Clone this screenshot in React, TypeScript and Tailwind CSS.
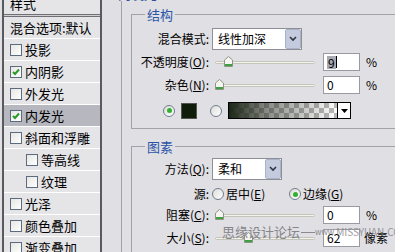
import React from "react";

const F = "font-['Noto_Sans_CJK_SC','Noto_Sans',sans-serif]";

function Check({ on }: { on?: boolean }) {
  return (
    <span className="w-[12px] h-[12px] border border-[#5d6b80] bg-gradient-to-br from-[#e6e6e2] to-white flex items-center justify-center shrink-0">
      {on && (
        <svg width="8" height="8" viewBox="0 0 8 8">
          <path d="M1 4 L3 6 L7 1.5" stroke="#2a9a2a" strokeWidth="2" fill="none" />
        </svg>
      )}
    </span>
  );
}

function Radio({ on }: { on?: boolean }) {
  return (
    <span className="w-[12px] h-[12px] rounded-full border border-[#6f7d90] bg-gradient-to-br from-[#dcdcd6] to-white flex items-center justify-center shrink-0">
      {on && <span className="w-[5px] h-[5px] rounded-full bg-[#30b030]" />}
    </span>
  );
}

function Thumb() {
  return (
    <svg width="9" height="11" viewBox="0 0 9 11">
      <path d="M0.5 4 L4.5 0.5 L8.5 4 L8.5 10.5 L0.5 10.5 Z" fill="#f4f4f0" stroke="#8e9488" />
      <rect x="1" y="8" width="7" height="2" fill="#3fa03f" />
    </svg>
  );
}

function Slider({ pos }: { pos: string }) {
  return (
    <div className="relative w-[100px] h-[18px] ml-[6px]">
      <div className="absolute left-0 right-0 top-[8px] h-[3px] rounded-full border border-[#c4c4ba] bg-[#f3f3ee]" />
      <div className={`absolute top-[3px] ${pos}`}>
        <Thumb />
      </div>
    </div>
  );
}

function Chevron() {
  return (
    <span className="w-[16px] h-[20px] bg-[#c5cbde] border border-[#aab2c8] rounded-[2px] flex items-center justify-center">
      <svg width="8" height="6" viewBox="0 0 8 6">
        <path d="M1 1 L4 4 L7 1" stroke="#30343e" strokeWidth="1.6" fill="none" />
      </svg>
    </span>
  );
}

function Label({ children }: { children: React.ReactNode }) {
  return <span className="w-[77px] text-right shrink-0 whitespace-nowrap">{children}</span>;
}

function Input({ children }: { children: React.ReactNode }) {
  return (
    <span className="ml-[8px] w-[37px] h-[18px] border border-[#9a9aa2] bg-white flex items-center pl-[3px] shrink-0">
      {children}
    </span>
  );
}

function Row({ label, sub, on, sel }: { label: string; sub?: boolean; on?: boolean; sel?: boolean }) {
  return (
    <div
      className={`h-[22px] border-b border-white flex items-center ${sub ? "pl-[22px]" : "pl-[6px]"} ${
        sel ? "bg-[#b7b7c0]" : "bg-[#e5e5e8]"
      }`}
    >
      <Check on={on} />
      <span className="ml-[3px] whitespace-nowrap">{label}</span>
    </div>
  );
}

export default function App() {
  return (
    <div className={`${F} w-[395px] h-[252px] overflow-hidden bg-[#e0dfe3] flex text-[12px] leading-[14px] text-black`}>
      <div className="ml-[2px] w-[100px] h-[260px] border-x-2 border-[#5a5a5e] bg-[#e5e5e8] flex flex-col shrink-0 text-[13px]">
        <div className="h-[14px] overflow-hidden pl-[6px]">
          <div className="-mt-[4px] leading-[16px]">样式</div>
        </div>
        <div className="h-[3px] border-y border-[#707074] bg-[#d0d0d4]" />
        <div className="h-[22px] border-b border-white flex items-center pl-[6px] whitespace-nowrap">混合选项:默认</div>
        <Row label="投影" />
        <Row label="内阴影" on />
        <Row label="外发光" />
        <Row label="内发光" on sel />
        <Row label="斜面和浮雕" />
        <Row label="等高线" sub />
        <Row label="纹理" sub />
        <Row label="光泽" />
        <Row label="颜色叠加" />
        <Row label="渐变叠加" />
      </div>

      <div className="relative ml-[19px] flex-1 border-l border-[#a2a2a8] pl-[9px] flex flex-col">
        <div className="absolute left-[-6px] top-[-13px] text-[#2a4f9c] text-[13px] leading-[14px] bg-[#e0dfe3] px-[2px]">内发光</div>

        {/* 结构 */}
        <div className="relative mt-[14px] h-[115px] border-y border-l border-[#a2a2a8] flex flex-col shrink-0">
          <span className="absolute left-[13px] top-[-7px] px-[2px] bg-[#e0dfe3] text-[#2a55a8] text-[13px] leading-[14px]">结构</span>
          <div className="mt-[13px] h-[22px] flex items-center">
            <Label>混合模式:</Label>
            <span className="ml-[3px] w-[90px] h-[22px] border border-[#8e8e98] bg-white flex items-center justify-between pl-[5px]">
              <span>线性加深</span>
              <Chevron />
            </span>
          </div>
          <div className="mt-[3px] h-[18px] flex items-center">
            <Label>
              不透明度(<span className="underline">O</span>):
            </Label>
            <Slider pos="left-[9px]" />
            <Input>
              <span className="bg-[#a9a9b2] px-[1px] leading-[13px]">9</span>
              <span className="w-[1px] h-[12px] bg-black" />
            </Input>
            <span className="ml-[6px]">%</span>
          </div>
          <div className="mt-[5px] h-[18px] flex items-center">
            <Label>
              杂色(<span className="underline">N</span>):
            </Label>
            <Slider pos="left-[0px]" />
            <Input>0</Input>
            <span className="ml-[6px]">%</span>
          </div>
          <div className="mt-[8px] h-[17px] flex items-center pl-[31px]">
            <Radio on />
            <span className="ml-[6px] w-[16px] h-[16px] border border-[#55554f] bg-[#0f1c09]" />
            <span className="ml-[13px]">
              <Radio />
            </span>
            <span className="ml-[6px] w-[123px] h-[17px] border border-black flex">
              <span className="flex-1 bg-[linear-gradient(to_right,#1c2616,rgba(40,45,35,0.55)_35%,transparent),repeating-conic-gradient(#b9b9b9_0_25%,#ffffff_0_50%)] bg-[length:100%_100%,10px_10px]" />
              <span className="w-[13px] border-l border-black bg-white flex items-center justify-center">
                <svg width="7" height="4" viewBox="0 0 7 4">
                  <path d="M0 0 H7 L3.5 4 Z" fill="#000" />
                </svg>
              </span>
            </span>
          </div>
        </div>

        {/* 图素 */}
        <div className="relative mt-[17px] h-[120px] border-t border-l border-[#a2a2a8] flex flex-col shrink-0">
          <span className="absolute left-[13px] top-[-7px] px-[2px] bg-[#e0dfe3] text-[#2a55a8] text-[13px] leading-[14px]">图素</span>
          <div className="mt-[11px] h-[22px] flex items-center">
            <Label>
              方法(<span className="underline">Q</span>):
            </Label>
            <span className="ml-[3px] w-[70px] h-[22px] border border-[#8e8e98] bg-white flex items-center justify-between pl-[5px]">
              <span>柔和</span>
              <Chevron />
            </span>
          </div>
          <div className="mt-[7px] h-[14px] flex items-center">
            <Label>源:</Label>
            <span className="ml-[3px] w-[77px] flex items-center">
              <Radio />
              <span className="ml-[2px] whitespace-nowrap">
                居中(<span className="underline">E</span>)
              </span>
            </span>
            <Radio on />
            <span className="ml-[2px] whitespace-nowrap">
              边缘(<span className="underline">G</span>)
            </span>
          </div>
          <div className="mt-[5px] h-[18px] flex items-center">
            <Label>
              阻塞(<span className="underline">C</span>):
            </Label>
            <Slider pos="left-[0px]" />
            <Input>0</Input>
            <span className="ml-[6px]">%</span>
          </div>
          <div className="relative mt-[5px] h-[18px] flex items-center">
            <Label>
              大小(<span className="underline">S</span>):
            </Label>
            <Slider pos="left-[29px]" />
            <Input>62</Input>
            <span className="ml-[4px]">像素</span>
            <div className="absolute left-[90px] top-[-4px] flex items-center text-[#85858a] whitespace-nowrap pointer-events-none">
              <span className="text-[13px] leading-[14px]">思缘设计论坛</span>
              <span className="w-[14px] h-[1px] bg-[#8a8a8e] ml-[1px]" />
              <span className="text-[8px] leading-[10px]">www.</span>
              <span className="text-[10px] leading-[10px] opacity-80">MISSYUAN.COM</span>
            </div>
          </div>
        </div>
      </div>
    </div>
  );
}
